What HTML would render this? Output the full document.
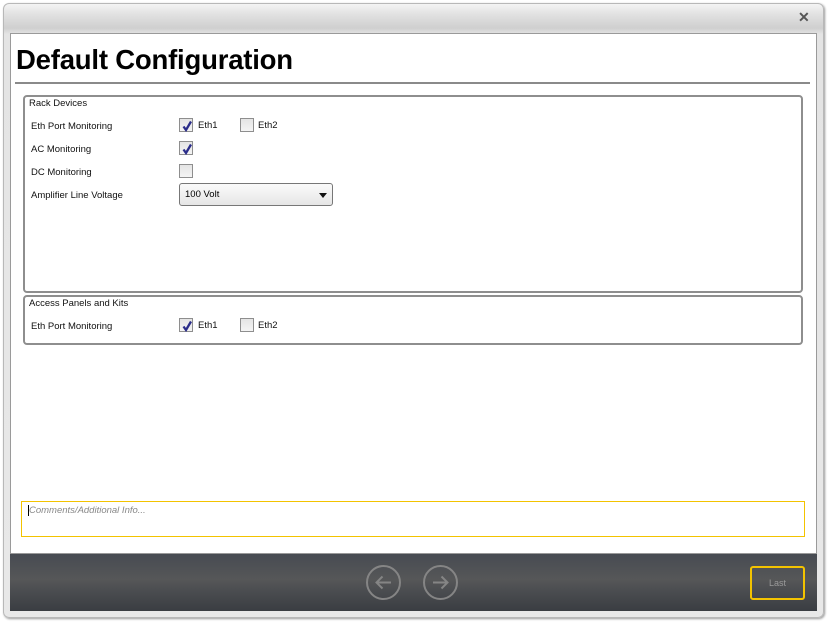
<!DOCTYPE html>
<html><head><style>
*{margin:0;padding:0;box-sizing:border-box}
body{width:828px;height:623px;background:#fff;position:relative;overflow:hidden;font-family:"Liberation Sans",sans-serif;}
.win{position:absolute;left:3px;top:3px;width:821px;height:615px;border:1px solid #b8b8b8;border-radius:6px;background:linear-gradient(#f4f4f4,#e2e2e2 10px,#cfcfcf 24px,#e4e4e4 30px,#e8e8e8);box-shadow:1px 1px 2px #999}
.x{position:absolute;left:798px;top:9px;font-size:14px;font-weight:bold;color:#555}
.content{position:absolute;left:10px;top:33px;width:807px;height:520px;background:#fff;border:1px solid #9a9a9a;border-bottom:none}
h1{position:absolute;left:16px;top:44px;font-size:27.5px;font-weight:bold;color:#000;letter-spacing:-0.2px}
.rule{position:absolute;left:15px;top:82px;width:795px;height:2px;background:#8a8a8a}
.grp{position:absolute;left:23px;width:780px;border:2px solid #8e8e8e;border-radius:4px}
.t{position:absolute;font-size:9.5px;color:#111;white-space:nowrap}
.cb{position:absolute;width:14px;height:14px;border:1px solid #8e8e8e;background:linear-gradient(#e4e4e4,#f4f4f4)}
.cb svg{position:absolute;left:1px;top:1px}
.dd{position:absolute;left:179px;top:183px;width:154px;height:23px;border:1px solid #777;border-radius:3px;background:linear-gradient(#fafafa,#e6e6e6);font-size:9.5px;padding:5px 5px}
.dd:after{content:"";position:absolute;right:5px;top:9px;border-left:4px solid transparent;border-right:4px solid transparent;border-top:5px solid #111}
.cm{position:absolute;left:21px;top:501px;width:784px;height:36px;border:1px solid #f3c300}
.cm span{position:absolute;left:7px;top:3px;font-size:9.5px;font-style:italic;color:#888}
.cm i{position:absolute;left:6px;top:3px;width:1px;height:11px;background:#000}
.foot{position:absolute;left:10px;top:553px;width:807px;height:58px;background:linear-gradient(#474b52,#565758 45%,#4d4f52 60%,#3a3d42);border-top:1px solid #999}
.circ{position:absolute;top:11px;width:35px;height:35px;border:2px solid #858585;border-radius:50%}
.last{position:absolute;left:740px;top:12px;width:55px;height:34px;border:2px solid #f3c300;border-radius:3px;color:#9a9a9a;font-size:9px;text-align:center;line-height:30px}
</style></head><body>
<div class="win"></div>
<div class="x">✕</div>
<div class="content"></div>
<h1>Default Configuration</h1>
<div class="rule"></div>
<div class="grp" style="top:95px;height:198px"></div>
<div class="grp" style="top:295px;height:50px"></div>
<div class="t" style="left:29px;top:98px">Rack Devices</div>
<div class="t" style="left:31px;top:121px">AC Monitoring</div>
<div class="t" style="left:31px;top:121px;visibility:hidden">x</div>
<div class="t" style="left:31px;top:144px;display:none"></div>
<div class="t" style="left:31px;top:121px;background:#fff;width:120px">Eth Port Monitoring</div>
<div class="t" style="left:31px;top:144px">AC Monitoring</div>
<div class="t" style="left:31px;top:167px">DC Monitoring</div>
<div class="t" style="left:31px;top:190px">Amplifier Line Voltage</div>
<div class="cb" style="left:179px;top:118px"><svg width="12" height="12"><path d="M2.5 6.5 L5 10 L10 1.5" stroke="#2b2d8a" stroke-width="2.3" fill="none"/></svg></div>
<div class="t" style="left:198px;top:120px">Eth1</div>
<div class="cb" style="left:240px;top:118px"></div>
<div class="t" style="left:258px;top:120px">Eth2</div>
<div class="cb" style="left:179px;top:141px"><svg width="12" height="12"><path d="M2.5 6.5 L5 10 L10 1.5" stroke="#2b2d8a" stroke-width="2.3" fill="none"/></svg></div>
<div class="cb" style="left:179px;top:164px"></div>
<div class="dd">100 Volt</div>
<div class="t" style="left:29px;top:298px">Access Panels and Kits</div>
<div class="t" style="left:31px;top:321px">Eth Port Monitoring</div>
<div class="cb" style="left:179px;top:318px"><svg width="12" height="12"><path d="M2.5 6.5 L5 10 L10 1.5" stroke="#2b2d8a" stroke-width="2.3" fill="none"/></svg></div>
<div class="t" style="left:198px;top:320px">Eth1</div>
<div class="cb" style="left:240px;top:318px"></div>
<div class="t" style="left:258px;top:320px">Eth2</div>
<div class="cm"><i></i><span>Comments/Additional Info...</span></div>
<div class="foot">
<div class="circ" style="left:356px"><svg width="31" height="31" viewBox="0 0 31 31"><path d="M23 15.5H8.5 M14.5 9.5 L8.5 15.5 L14.5 21.5" stroke="#858585" stroke-width="2" fill="none"/></svg></div>
<div class="circ" style="left:413px"><svg width="31" height="31" viewBox="0 0 31 31"><path d="M8 15.5H22.5 M16.5 9.5 L22.5 15.5 L16.5 21.5" stroke="#858585" stroke-width="2" fill="none"/></svg></div>
<div class="last">Last</div>
</div>
</body></html>
